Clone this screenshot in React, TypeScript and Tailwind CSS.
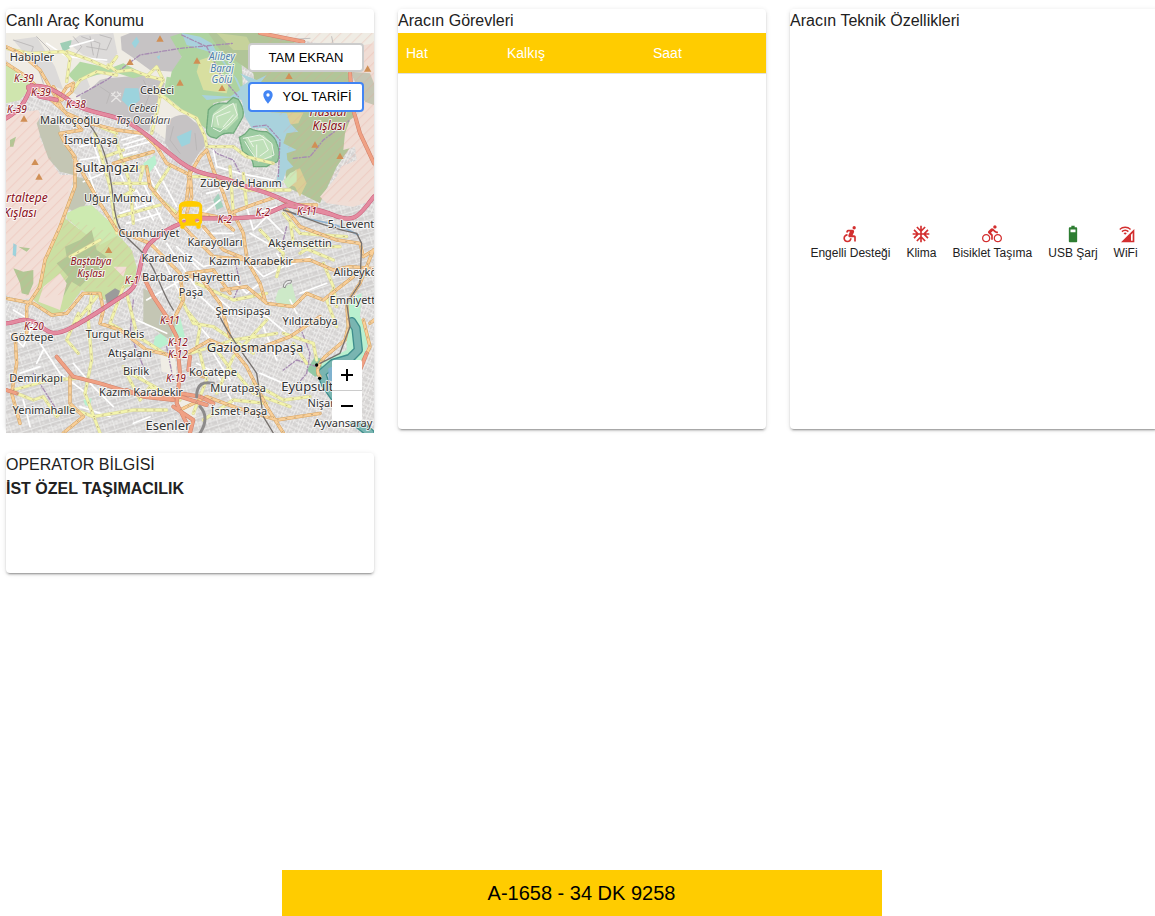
import type { ReactNode } from "react";
import {
  MdAccessibleForward,
  MdAcUnit,
  MdCellWifi,
  MdDirectionsBike,
  MdDirectionsBus,
  MdPlace,
} from "react-icons/md";

type Area = { d: string; fill: string };

const areas: Area[] = [
  { fill: "#efece4", d: "M18 99H560L640 330 500 420 420 360 300 350 230 300 100 250 18 180Z" },
  { fill: "#cfe5ae", d: "M18 190 50 215 100 255 60 300 18 310Z" },
  { fill: "#dcdad9", d: "M240 105 340 99 352 160 330 190 250 165 205 130Z" },
  { fill: "#dcdad9", d: "M40 120 110 110 165 200 190 270 140 250 90 180Z" },
  { fill: "#c6c3c4", d: "M362 110 390 99H560L545 170 520 215 450 210 395 170 365 150Z" },
  { fill: "#c6c3c4", d: "M240 285Q270 270 300 240L320 235 440 225 495 250 480 300 460 350 445 395 390 370 320 345 250 325Z" },
  { fill: "#dcdad9", d: "M225 245 260 235 270 260 240 290 215 275Z" },
  { fill: "#c6c3c4", d: "M500 365Q530 340 560 345L605 385 622 430 600 455 570 500 530 475 495 430Z" },
  { fill: "#b3d8a4", d: "M205 225 240 185 330 205 370 190 440 225 400 235 340 215 290 225 225 245Z" },
  { fill: "#b3d8a4", d: "M500 230 560 240 570 290 530 310 490 285Z" },
  { fill: "#9fceb5", d: "M180 130 215 120 210 145 190 155Z" },
  { fill: "#aed3a0", d: "M510 110 545 99H720L730 290 640 310 622 390 560 340 500 290 515 215 545 170Z" },
  { fill: "#d8dfa0", d: "M600 180 630 170 660 215 690 240 680 280 610 270 590 215Z" },
  { fill: "#b1c598", d: "M625 99 790 99 960 150 1040 200 1060 300 1080 400 1010 500 960 610 860 560 850 440 780 370 760 220 660 150Z" },
  { fill: "#c6d29b", d: "M650 99 740 110 760 150 700 150Z" },
  { fill: "#d9cf96", d: "M840 340 910 338 895 370 860 375ZM885 510 900 505 920 550 900 590 885 560 870 555Z" },
  { fill: "#f0ddd5", d: "M1055 150 1122 110V600L1060 620 980 610 960 590 1010 530 1025 500 1070 480 1065 440 1030 450 1035 400 1050 360 1090 330Z" },
  { fill: "#c5c6b4", d: "M1050 215 1110 220 1122 250V315L1095 305Z" },
  { fill: "#efece4", d: "M800 99H1122V130L1040 145 900 120Z" },
  { fill: "#f2ded6", d: "M18 345 80 335 115 330 130 370 118 410 150 480 180 525 222 525 205 600 135 780 105 890 60 900 18 885Z" },
  { fill: "#c4c6b4", d: "M125 345 175 370Q180 400 190 410L215 450 222 525 180 515 145 475 120 405 110 370Z" },
  { fill: "#c4c6b4", d: "M230 530 270 540 300 620 265 600 235 645 205 625Z" },
  { fill: "#cdeab0", d: "M200 640 240 620 275 615 345 680 355 710 300 740 200 655Z" },
  { fill: "#cbdfa2", d: "M195 655 300 735 355 705 395 750 410 800 405 850 315 900 245 870 205 925 165 950 100 900 130 800Z" },
  { fill: "#b2c795", d: "M195 740 240 720 275 690 290 750 320 770 300 810 280 820 240 860 215 845 190 890 175 870 205 830 170 790 200 770Z" },
  { fill: "#b2c795", d: "M40 805 70 815 100 810 100 850 85 885 65 880 60 850ZM30 420 48 410 40 440 30 440ZM55 740 90 745 80 755Z" },
  { fill: "#f2ded6", d: "M130 860 180 820 200 850 180 930 115 905ZM340 800 380 800 370 830Z" },
  { fill: "#9bcaa0", d: "M625 330Q645 305 680 310L700 292 715 298Q735 330 728 352 715 375 700 400 670 395 650 415 615 410 620 385Z" },
  { fill: "#9bcaa0", d: "M718 412 735 402 750 385Q770 395 800 395 825 410 830 430 843 460 832 485 810 492 800 500H760Q760 470 728 455Z" },
  { fill: "#bfe0b9", d: "M640 340 670 315 710 310 715 355 680 390 640 380Z" },
  { fill: "#bfe0b9", d: "M735 415 790 405 820 435 815 475 770 480Z" },
  { fill: "#cde9b8", d: "M870 520 890 510 890 545 865 565 850 545Z" },
  { fill: "#a4d2bd", d: "M640 600 655 580 670 620 650 630Z" },
  { fill: "#b9f0cf", d: "M430 490 465 465 470 490 440 530ZM465 1010 490 995 505 1030 480 1045 460 1035ZM250 1200 275 1195 270 1220 255 1215ZM500 965 540 950 555 1010 525 1030Z" },
  { fill: "#c4c6b4", d: "M430 865 460 880 490 940 535 955 510 1020 430 965Z" },
  { fill: "#9b9b9b", d: "M315 885 345 865 365 875 350 900 320 910Z" },
  { fill: "#cde9c8", d: "M835 870 875 850 890 905 845 925 825 900Z" },
  { fill: "#f0ede5", d: "M480 1060 525 1065 530 1125 485 1115ZM530 1200 580 1195 590 1250 560 1260ZM1000 1210 1060 1200 1050 1290 1000 1280Z" },
  { fill: "#92c8a5", d: "M945 1070 975 1080 985 1120 945 1130 920 1110Z" },
  { fill: "#b9f0cf", d: "M1040 900 1085 880 1080 950 1110 1010 1085 1090 980 1120 960 1090 1040 1050Z" },
  { fill: "#9cd3dd", d: "M395 130 410 110 418 125 405 145ZM375 265 415 265 420 300 390 325 365 300ZM530 410 575 390 570 430 545 440ZM40 730 50 735 48 770 38 765ZM470 170 480 165 478 180Z" },
  { fill: "#a9d2dd", d: "M545 99 600 110 635 130 670 190 710 235 722 260 745 245 720 220 770 240 800 225 780 250 770 270 800 300 795 335 860 340 870 370 895 395 860 400 850 430 890 450 860 460 862 480 880 500 860 510 850 540 825 560 840 490 830 430 800 385 755 385 735 350 725 300 700 292 620 300 605 285 690 290 720 270 700 225 660 165 560 135Z" },
];

const rails: string[] = [
  "M265 370C310 420 330 500 340 600S370 700 420 750 480 870 520 930",
  "M850 630C920 650 960 680 1070 700L1085 730 1080 850 1040 910 1050 980 1020 1060 960 1090",
  "M655 940C680 1000 730 1060 770 1120L790 1250 820 1299",
];

const whiteStreets: string[] = [
  "M365 420 430 400M370 435 450 410M360 450 450 425M355 470 410 455M350 500 380 560M420 530 490 670M440 520 510 640M465 500 530 620M350 600 410 570 460 660M360 640 450 610M380 670 480 640M390 560 420 650",
  "M240 440 280 430 310 520 250 545M240 480 300 470M260 500 290 590M300 610 330 600",
  "M470 740 550 900M500 730 600 880M530 740 620 830M440 900 560 830M580 870 690 970M600 850 720 950",
  "M640 450 650 500 720 520 820 540M620 580 700 560 770 570M740 620 760 690 800 650 850 700M770 640 830 620M750 700 820 740",
  "M830 760 860 800 930 770M740 780 790 830 850 800M900 880 980 850M690 830 740 880 780 850",
  "M600 980 650 1040 700 1050M740 930 800 950 860 1000M790 980 830 1080M590 1090 650 1120 700 1210M640 1060 690 1140M780 1120 850 1150",
  "M40 930 90 960M100 970 70 1040 30 1000M120 1030 180 1120 260 1180M60 1120 120 1100M70 1200 90 1280M220 1090 280 1160 340 1220M240 1220 330 1250M350 1050 410 1060",
  "M140 130 200 170 320 180M210 140 280 120M410 960 500 1000M430 1130 470 1180 510 1180",
  "M630 700 700 700M610 640 660 600M650 720 610 690M560 760 610 800 650 790M890 940 870 900M400 1270 450 1250M130 1050 110 1090",
];

const yellowRoads: string[] = [
  "M18 145 90 160 190 155 210 175 200 245M200 155 270 180 325 205 350 170M325 195 350 215 395 210 450 230 490 240 470 200 440 230M490 240 470 280 490 290 540 330 590 355 615 410 620 440",
  "M240 240 290 215 350 225M240 240 215 275M480 290 470 340 455 400",
  "M300 380 350 400M285 400 330 560 350 700M345 410 390 550 400 670M360 480 450 460M315 470 370 450M370 510 430 500 420 540M340 550 450 550M350 600 400 570M355 650 480 615",
  "M510 500 470 560 460 580 530 640M620 440 700 440 740 470 820 490M690 500 700 640M730 520 740 620M570 530 640 530 740 570 870 570",
  "M210 770 300 720M225 970 290 890M235 1060 200 1020 235 940M275 880 265 960 275 1080M275 1080 255 1180 300 1299M40 1170 150 1140 230 1135",
  "M370 860 330 970 400 1010M380 880 410 1000M330 980 430 1020 500 1065M540 890 580 970 640 980 760 1060M590 850 700 900 800 880",
  "M50 1180 100 1200 130 1190 170 1250 200 1220 280 1250 400 1230 500 1230M370 1100 420 1200 450 1160 540 1200M390 1120 500 1180",
  "M780 690 850 760 830 830M870 660 880 730 1000 780M970 790 1000 860 1010 920M900 760 930 740 1020 740M800 960 700 1070 650 1180M570 1060 700 1020 830 1000",
  "M850 1000 940 1030 950 1080M760 1150 850 1200 930 1190M710 1120 760 1180 870 1220M880 1030 920 1090M1000 870 980 900 1010 980M850 640 900 700 1040 710",
  "M590 1040 600 980 560 930M600 1060 620 1140 580 1240M650 1050 700 1120M610 1260 700 1200 800 1210",
];

const orangeRoads: string[] = [
  "M18 190 80 230 120 270 200 340 270 370 350 390 430 400 470 440 500 490 560 520M18 140 60 160 120 210 190 330 245 390 180 400 195 430 225 470 225 560 180 680 135 780 120 860 80 920 80 1000",
  "M18 895 100 910 155 945 200 940 250 880 300 880 310 930 300 970 360 990 440 1050 530 1070",
  "M220 470 300 610 350 690 450 730 540 820 550 900 520 960",
  "M440 500 450 560 500 620 570 700 640 770 750 780M340 490 460 455",
  "M565 530 600 470 620 450 640 510 670 580 690 640M570 510 560 600 530 650M600 640 650 650 700 690M570 510 575 590 560 640",
  "M690 640 770 610 830 590 870 615 950 615M700 640 730 700 740 770M610 680 670 750 770 790 930 780 1000 810 1050 800 1122 805",
  "M665 870 740 860 800 910 880 920 920 880 970 900 1060 830M740 780 780 850 795 900M560 820 640 810 690 880",
  "M700 1050 790 1040 870 1010 960 950M560 1060 630 1020 700 1050 740 1100 800 1220 850 1299",
  "M960 1130Q940 1110 975 1070L1035 1020 1045 980 1040 910 1080 850 1120 750M860 630 900 680 1010 720 1080 730 1090 770 1122 750M1090 960 1110 1040 1090 1080M1110 970 1122 960",
  "M210 1130 210 1210 250 1250 190 1299M45 1000 50 1090 35 1180 60 1270M540 1230 620 1190 700 1220 830 1260 960 1240M610 1130 580 1120",
  "M170 310 200 260 220 250 215 275 185 300 160 260M540 830 600 830 660 910 690 1010",
];

const redRoads: string[] = [
  "M780 99 910 125M1050 220 1060 330 1080 400 1122 490",
  "M430 830 460 890 500 950 530 1010 540 1120 530 1210 560 1270",
  "M170 1070 220 1130 300 1150 400 1180 480 1190 540 1190 620 1215",
  "M540 1180 600 1190 640 1210M520 1220 580 1260 570 1299M570 1070 565 1110",
  "M380 1170 430 1190 520 1200M18 1170 50 1180M1100 1060 1080 1110",
];

const pinkRoads: string[] = [
  "M18 355C60 330 75 310 95 255M85 260C140 250 180 280 220 310S330 340 380 365 480 440 540 485 640 520 700 545 790 570 850 600 930 615 1000 645 1080 640 1122 590",
  "M85 265 120 290 170 300M600 655 700 655 780 650 860 615 940 630 1000 645",
  "M600 655C540 665 490 690 450 730S430 850 380 880 280 950 210 985 140 980 100 965 50 970 18 970",
];

const boundaries: string[] = [
  "M230 290 320 240 420 165 540 145 700 130",
  "M545 105 620 140 665 230 715 290M760 380 800 375 840 420 835 530",
  "M880 475 930 470 970 420 1050 360",
  "M700 760 720 850 700 900M900 980 930 1060 920 1120 870 1180M400 900 390 1000 430 1100",
  "M100 1120 170 1230M500 1040 520 1140M860 680 840 760M620 430 650 460 700 480 720 520M950 1100 890 1080 850 1110",
];

const islandPaths = [
  "M635 380 640 345 665 330 700 310 712 345 690 370 660 395 640 385M655 375 650 350 690 335M670 380 700 345",
  "M730 415 780 405 815 430 822 465 775 485 750 450 735 425M750 425 790 418 805 450 780 468M770 435V480M745 415 760 440",
];

const peaks: [number, number][] = [
  [480, 116], [390, 186], [591, 182], [540, 248], [666, 264], [867, 228], [1103, 206],
  [72, 356], [105, 486], [117, 530], [326, 750], [945, 434], [1020, 468],
];

const towns: [string, number, number, number][] = [
  ["Habipler", 32, 61, 11], ["Cebeci", 157, 94, 11], ["Malkoçoğlu", 70, 124, 11],
  ["İsmetpaşa", 91, 144, 11], ["Sultangazi", 107, 172, 13], ["Uğur Mumcu", 118, 202, 11],
  ["Zübeyde Hanım", 241, 187, 11], ["Cumhuriyet", 149, 237, 11], ["Karayolları", 215, 246, 11],
  ["Akşemsettin", 300, 247, 11], ["5. Levent", 351, 228, 11], ["Karadeniz", 167, 262, 11],
  ["Kazım Karabekir", 251, 265, 11], ["Barbaros Hayrettin", 191, 281, 11], ["Paşa", 191, 296, 11],
  ["Alibeyköy", 358, 276, 11], ["Emniyettepe", 362, 304, 11], ["Şemsipaşa", 243, 315, 11],
  ["Yıldıztabya", 310, 325, 11], ["Gaziosmanpaşa", 255, 352, 13], ["Turgut Reis", 115, 338, 11],
  ["Göztepe", 32, 341, 11], ["Atışalanı", 130, 357, 11], ["Birlik", 136, 375, 11],
  ["Kocatepe", 213, 376, 11], ["Demirkapı", 36, 382, 11], ["Muratpaşa", 238, 392, 11],
  ["Kazım Karabekir", 141, 396, 11], ["Eyüpsultan", 315, 391, 13], ["Nişanca", 328, 407, 11],
  ["Yenimahalle", 44, 414, 11], ["İsmet Paşa", 239, 415, 11], ["Esenler", 168, 430, 13],
  ["Ayvansaray", 343, 427, 11],
];

const militaryAreas: [string, number, number, number][] = [
  ["rtaltepe", 27, 202, 12], ["Kışlası", 20, 217, 12], ["Baştabya", 91, 265, 10],
  ["Kışlası", 91, 277, 10], ["Hasdal", 328, 116, 12], ["Kışlası", 329, 130, 12],
];

const roadRefs: [string, number, number][] = [
  ["K-39", 24, 82], ["K-39", 41, 96], ["K-39", 17, 113], ["K-38", 76, 108],
  ["K-2", 225, 223], ["K-2", 263, 216], ["K-11", 307, 215], ["K-1", 132, 284],
  ["K-20", 34, 330], ["K-11", 170, 324], ["K-12", 178, 346], ["K-12", 178, 358], ["K-19", 176, 382],
];

function Roads({ paths, casing, color, width }: { paths: string[]; casing: string; color: string; width: number }) {
  const d = paths.join("");
  return (
    <>
      <path d={d} stroke={casing} strokeWidth={width + 3} />
      <path d={d} stroke={color} strokeWidth={width} />
    </>
  );
}

function CityMap() {
  return (
    <svg
      className="block h-full w-full"
      viewBox="6 33 368 400"
      preserveAspectRatio="xMidYMid slice"
      role="img"
      aria-label="Harita"
    >
      <defs>
        <pattern id="blocks" width="34" height="30" patternUnits="userSpaceOnUse" patternTransform="rotate(24)">
          <rect width="34" height="30" fill="#d8d6d5" />
          <path d="M0 3H34M0 17H18M18 12H34M7 3V17M18 0V30M27 12V30M10 17V30M27 3V9" stroke="#f3f2f1" strokeWidth="2.5" />
          <path d="M2 9H16M21 7H32M3 25H16M21 22H32" stroke="#c6c4c4" strokeWidth="1.5" />
        </pattern>
        <pattern id="blocks-tilted" width="30" height="38" patternUnits="userSpaceOnUse" patternTransform="rotate(-17)">
          <rect width="30" height="38" fill="#d5d3d2" />
          <path d="M0 4H30M0 15H14M0 26H30M14 4V38M24 15V38M6 15V26M14 20H30" stroke="#f0efee" strokeWidth="2.5" />
          <path d="M3 10H24M17 31H28M4 32H11" stroke="#c3c1c1" strokeWidth="1.5" />
        </pattern>
        <pattern id="hatch" width="22" height="22" patternUnits="userSpaceOnUse" patternTransform="rotate(45)">
          <path d="M2 0V22" stroke="#e79d91" strokeWidth="1.5" opacity="0.55" />
        </pattern>
      </defs>
      <g transform="scale(0.33333)" fill="none" strokeLinejoin="round" strokeLinecap="round">
        <rect x="0" y="80" width="1140" height="1240" fill="url(#blocks)" />
        <path d="M18 960H530L650 1040 720 1299H18ZM600 440 860 560 1122 640V900H620Z" fill="url(#blocks-tilted)" />
        {areas.map((area) => (
          <path key={area.d} d={area.d} fill={area.fill} />
        ))}
        <path
          d="M18 345 115 330 118 410 180 525 222 525 135 780 100 900 250 870 410 850 400 750 340 700 200 655 105 890 18 885ZM790 99 1122 99V600L960 610 860 560 880 500 850 395 880 360 790 330Z"
          fill="url(#hatch)"
        />
        <path
          d="M40 120 100 140 90 170M50 170 110 190 130 250M110 110 150 150 130 180M220 110 245 140 225 165M245 110 300 130 290 175M300 105 335 115 320 150 260 140M900 130 1000 135 995 110M260 340 290 370 270 400M270 110 280 165M840 120 930 115M300 260 330 280 320 310M430 240 450 280 430 330M520 380 510 420 540 460M585 400 590 450"
          stroke="#b7b5b5"
          strokeWidth="2.5"
        />
        <path d={islandPaths.join("")} stroke="#edf5e8" strokeWidth="3" />
        <path
          d="M625 330Q645 305 680 310L700 292 715 298Q735 330 728 352 715 375 700 400 670 395 650 415 615 410 620 385ZM718 412 735 402 750 385Q770 395 800 395 825 410 830 430 843 460 832 485 810 492 800 500H760Q760 470 728 455Z"
          stroke="#70aa7c"
          strokeWidth="4"
          strokeDasharray="8 3"
        />
        <path d="M335 280 362 305M362 280 335 305M345 276 336 287M352 276 361 287" stroke="#e8e6e5" strokeWidth="4" />
        <path d="M850 860C850 845 865 838 875 842L872 850C862 848 857 855 856 862Z" fill="#e8e8e8" stroke="#888" strokeWidth="3" />
        <path d={boundaries.join("")} stroke="#a68bb2" strokeWidth="4" strokeDasharray="12 6 3 6" />
        <path d={whiteStreets.join("")} stroke="#ffffff" strokeWidth="5" />
        <Roads paths={yellowRoads} casing="#d8d69c" color="#f3f4ad" width={7} />
        <path d="M850 620C900 670 980 650 1075 705" stroke="#8fb3d0" strokeWidth="5" />
        <path d="M1055 965 1068 985 1075 1050 1050 1075 1000 1090 965 1120 975 1150 1010 1200 1060 1260 1110 1299" stroke="#3f8f8d" strokeWidth="28" />
        <path d="M1055 965 1068 985 1075 1050 1050 1075 1000 1090 965 1120 975 1150 1010 1200 1060 1260 1110 1299" stroke="#79b5b1" strokeWidth="20" />
        <path d="M985 1105 1010 1095V1150L985 1140Z" fill="#7fb2cf" />
        <Roads paths={orangeRoads} casing="#d5a15f" color="#f9cf98" width={7} />
        <Roads paths={redRoads} casing="#cf806a" color="#f0a184" width={9} />
        <Roads paths={pinkRoads} casing="#c95a78" color="#e48ba0" width={10} />
        <path d={rails.join("")} stroke="#76716e" strokeWidth="4" />
        <path d="M590 1190C590 1150 610 1145 640 1150M600 1299C620 1270 620 1240 600 1220" stroke="#8d8b8b" strokeWidth="9" />
        <path d={orangeRoads.join("") + yellowRoads.join("")} stroke="#a89274" strokeWidth="2" strokeDasharray="4 22" />
        {peaks.map(([x, y]) => (
          <path key={`${x}-${y}`} d={`M${x - 11} ${y + 9}L${x} ${y - 10}L${x + 11} ${y + 9}Z`} fill="#d08f55" />
        ))}
        <circle cx="950" cy="1095" r="5" fill="#000" />
        <circle cx="959" cy="1135" r="5" fill="#000" />
      </g>
      <g
        fontFamily='"Noto Sans", "Open Sans", sans-serif'
        textAnchor="middle"
        paintOrder="stroke"
        stroke="#ffffff"
        strokeOpacity="0.75"
        strokeWidth="2"
        strokeLinejoin="round"
      >
        <g fill="#333333">
          {towns.map(([name, x, y, size]) => (
            <text key={`${name}-${y}`} x={x} y={y} fontSize={size}>{name}</text>
          ))}
        </g>
        <g fill="#444444" fontSize="10" fontStyle="italic">
          <text x="143" y="112">Cebeci</text>
          <text x="143" y="124">Taş Ocakları</text>
        </g>
        <g fill="#4f80ad" fontSize="10" fontStyle="italic">
          <text x="222" y="60">Alibey</text>
          <text x="222" y="72">Baraj</text>
          <text x="222" y="83">Gölü</text>
        </g>
        <g fill="#8b1020" fontStyle="italic">
          {militaryAreas.map(([name, x, y, size]) => (
            <text key={`${name}-${y}`} x={x} y={y} fontSize={size}>{name}</text>
          ))}
          {roadRefs.map(([name, x, y]) => (
            <text key={`${name}-${x}-${y}`} x={x} y={y} fontSize="10">{name}</text>
          ))}
        </g>
      </g>
    </svg>
  );
}

function BatteryIcon({ className }: { className?: string }) {
  return (
    <svg viewBox="0 0 24 24" className={className} fill="currentColor" fillRule="evenodd" aria-hidden="true">
      <path d="M10 2H14V4H16Q17 4 17 5V21Q17 22 16 22H8Q7 22 7 21V5Q7 4 8 4H10ZM9 6.5V10H15V6.5Z" />
    </svg>
  );
}

function Card({ title, children, className }: { title: string; children?: ReactNode; className: string }) {
  return (
    <section
      className={`rounded bg-white shadow-[0_3px_1px_-2px_rgba(0,0,0,0.2),0_2px_2px_0_rgba(0,0,0,0.14),0_1px_5px_0_rgba(0,0,0,0.12)] ${className}`}
    >
      <h2 className="text-base leading-6">{title}</h2>
      {children}
    </section>
  );
}

const features = [
  { label: "Engelli Desteği", Icon: MdAccessibleForward, color: "text-[#d32f2f]" },
  { label: "Klima", Icon: MdAcUnit, color: "text-[#d32f2f]" },
  { label: "Bisiklet Taşıma", Icon: MdDirectionsBike, color: "text-[#d32f2f]" },
  { label: "USB Şarj", Icon: BatteryIcon, color: "text-[#2e7d32]" },
  { label: "WiFi", Icon: MdCellWifi, color: "text-[#d32f2f]" },
];

export default function App() {
  return (
    <div className="flex min-h-screen flex-col overflow-x-hidden bg-white font-['Liberation_Sans',Arial,sans-serif] text-[#212121]">
      <main className="-mr-[3px] grid grid-cols-3 gap-6 pt-[9px] pl-1.5">
        <Card title="Canlı Araç Konumu" className="h-[420px]">
          <div className="relative h-[400px] overflow-hidden">
            <CityMap />
            <MdDirectionsBus className="absolute top-[165px] left-[167px] size-[35px] text-[#ffcc00]" />
            <div className="absolute top-2.5 right-2.5 flex w-[116px] flex-col gap-2.5 text-[13px] leading-5 text-black">
              <button className="flex h-[29px] items-center justify-center rounded border-2 border-[#cccccc] bg-white">
                TAM EKRAN
              </button>
              <button className="flex h-[30px] items-center justify-center gap-1.5 rounded border-2 border-[#4285f4] bg-white">
                <MdPlace className="size-4 text-[#4285f4]" />
                YOL TARİFİ
              </button>
            </div>
            <div className="absolute right-3 bottom-3 flex w-[30px] flex-col rounded-xs bg-white text-black">
              <button aria-label="Yakınlaştır" className="flex h-[31px] items-center justify-center border-b border-[#cccccc]">
                <svg viewBox="0 0 12 12" className="size-3" aria-hidden="true">
                  <path d="M6 0V12M0 6H12" stroke="currentColor" strokeWidth="2" />
                </svg>
              </button>
              <button aria-label="Uzaklaştır" className="flex h-[30px] items-center justify-center">
                <svg viewBox="0 0 12 12" className="size-3" aria-hidden="true">
                  <path d="M0 6H12" stroke="currentColor" strokeWidth="2" />
                </svg>
              </button>
            </div>
          </div>
        </Card>

        <Card title="Aracın Görevleri" className="h-[420px]">
          <table className="w-full table-fixed border-collapse text-left text-sm leading-6 text-white">
            <thead className="bg-[#ffcc00]">
              <tr className="border-b border-[#e0e0e0]">
                <th className="w-[101px] px-2 py-2 font-normal">Hat</th>
                <th className="w-[146px] px-2 py-2 font-normal">Kalkış</th>
                <th className="px-2 py-2 font-normal">Saat</th>
              </tr>
            </thead>
          </table>
        </Card>

        <Card title="Aracın Teknik Özellikleri" className="flex h-[420px] flex-col">
          <ul className="flex justify-center gap-4 pt-[191px]">
            {features.map(({ label, Icon, color }) => (
              <li key={label} className="flex flex-col items-center text-xs leading-[18px] whitespace-nowrap">
                <Icon className={`size-5 ${color}`} />
                {label}
              </li>
            ))}
          </ul>
        </Card>

        <Card title="OPERATOR BİLGİSİ" className="h-[120px]">
          <p className="text-base leading-6 font-bold">İST ÖZEL TAŞIMACILIK</p>
        </Card>
      </main>

      <footer className="mx-auto mt-auto flex h-[46px] w-full max-w-[600px] translate-x-1 items-center justify-center bg-[#ffcc00] text-xl leading-8 text-black">
        A-1658 - 34 DK 9258
      </footer>
    </div>
  );
}
